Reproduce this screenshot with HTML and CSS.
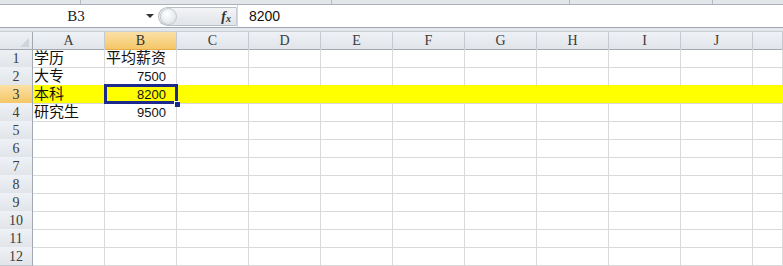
FILE: index.html
```html
<!DOCTYPE html>
<html lang="zh-CN">
<head>
    <meta charset="UTF-8">
    <title>工作表</title>
    <link rel="stylesheet" href="styles.css">
</head>
<body>
    <div class="ribbon">
        <span class="seg" style="width:81px"></span>
        <span class="seg" style="width:251px"></span>
        <span class="seg" style="width:238px"></span>
        <span class="seg" style="width:143px"></span>
        <span class="seg last"></span>
    </div>

    <div class="formula-bar">
        <div class="name-box">
            <span class="name">B3</span>
            <span class="arrow"></span>
        </div>
        <div class="fx-pill">
            <span class="knob"></span>
            <span class="fx">f<sub>x</sub></span>
        </div>
        <div class="formula">8200</div>
    </div>

    <div class="spacer"></div>

    <div class="sheet">
        <div class="row head">
            <div class="corner"><span class="tri"></span></div>
            <div class="ch">A</div><div class="ch sel">B</div><div class="ch">C</div><div class="ch">D</div><div class="ch">E</div>
            <div class="ch">F</div><div class="ch">G</div><div class="ch">H</div><div class="ch">I</div><div class="ch">J</div><div class="ch"></div>
        </div>
        <div class="row">
            <div class="rh">1</div>
            <div class="c">学历</div><div class="c">平均薪资</div><div class="c"></div><div class="c"></div><div class="c"></div>
            <div class="c"></div><div class="c"></div><div class="c"></div><div class="c"></div><div class="c"></div><div class="c"></div>
        </div>
        <div class="row">
            <div class="rh">2</div>
            <div class="c">大专</div><div class="c num">7500</div><div class="c"></div><div class="c"></div><div class="c"></div>
            <div class="c"></div><div class="c"></div><div class="c"></div><div class="c"></div><div class="c"></div><div class="c"></div>
        </div>
        <div class="row hl">
            <div class="rh sel">3</div>
            <div class="c">本科</div><div class="c num">8200</div><div class="c"></div><div class="c"></div><div class="c"></div>
            <div class="c"></div><div class="c"></div><div class="c"></div><div class="c"></div><div class="c"></div><div class="c"></div>
        </div>
        <div class="row">
            <div class="rh">4</div>
            <div class="c">研究生</div><div class="c num">9500</div><div class="c"></div><div class="c"></div><div class="c"></div>
            <div class="c"></div><div class="c"></div><div class="c"></div><div class="c"></div><div class="c"></div><div class="c"></div>
        </div>
        <div class="row">
            <div class="rh">5</div>
            <div class="c"></div><div class="c"></div><div class="c"></div><div class="c"></div><div class="c"></div>
            <div class="c"></div><div class="c"></div><div class="c"></div><div class="c"></div><div class="c"></div><div class="c"></div>
        </div>
        <div class="row">
            <div class="rh">6</div>
            <div class="c"></div><div class="c"></div><div class="c"></div><div class="c"></div><div class="c"></div>
            <div class="c"></div><div class="c"></div><div class="c"></div><div class="c"></div><div class="c"></div><div class="c"></div>
        </div>
        <div class="row">
            <div class="rh">7</div>
            <div class="c"></div><div class="c"></div><div class="c"></div><div class="c"></div><div class="c"></div>
            <div class="c"></div><div class="c"></div><div class="c"></div><div class="c"></div><div class="c"></div><div class="c"></div>
        </div>
        <div class="row">
            <div class="rh">8</div>
            <div class="c"></div><div class="c"></div><div class="c"></div><div class="c"></div><div class="c"></div>
            <div class="c"></div><div class="c"></div><div class="c"></div><div class="c"></div><div class="c"></div><div class="c"></div>
        </div>
        <div class="row">
            <div class="rh">9</div>
            <div class="c"></div><div class="c"></div><div class="c"></div><div class="c"></div><div class="c"></div>
            <div class="c"></div><div class="c"></div><div class="c"></div><div class="c"></div><div class="c"></div><div class="c"></div>
        </div>
        <div class="row">
            <div class="rh">10</div>
            <div class="c"></div><div class="c"></div><div class="c"></div><div class="c"></div><div class="c"></div>
            <div class="c"></div><div class="c"></div><div class="c"></div><div class="c"></div><div class="c"></div><div class="c"></div>
        </div>
        <div class="row">
            <div class="rh">11</div>
            <div class="c"></div><div class="c"></div><div class="c"></div><div class="c"></div><div class="c"></div>
            <div class="c"></div><div class="c"></div><div class="c"></div><div class="c"></div><div class="c"></div><div class="c"></div>
        </div>
        <div class="row">
            <div class="rh">12</div>
            <div class="c"></div><div class="c"></div><div class="c"></div><div class="c"></div><div class="c"></div>
            <div class="c"></div><div class="c"></div><div class="c"></div><div class="c"></div><div class="c"></div><div class="c"></div>
        </div>

        <div class="selection"></div>
        <div class="handle"></div>
    </div>
</body>
</html>
```

FILE: styles.css
```css
* {
    box-sizing: border-box;
}

body {
    margin: 0;
    width: 783px;
    height: 266px;
    overflow: hidden;
    background-color: #fff;
    font-family: "Liberation Sans", Arial, sans-serif;
}

/* remains of the ribbon above the formula bar */
.ribbon {
    display: flex;
    height: 5px;
    background-color: #e3e7ec;
    border-bottom: 1px solid #a9b0b8;
}

.seg {
    height: 100%;
    border-right: 1px solid #b4bbc3;
}

.seg.last {
    flex: 1;
    border-right: none;
}

.formula-bar {
    display: flex;
    height: 23px;
    background-color: #fff;
    border-bottom: 1px solid #a0a8b1;
}

.name-box {
    display: flex;
    align-items: center;
    width: 158px;
}

.name {
    flex: 1;
    text-align: center;
    font-family: "Liberation Serif", serif;
    font-size: 15px;
    color: #222;
    padding-left: 6px;
}

.arrow {
    width: 0;
    height: 0;
    margin-right: 4px;
    border-left: 4px solid transparent;
    border-right: 4px solid transparent;
    border-top: 4px solid #333;
}

.fx-pill {
    display: flex;
    align-items: center;
    justify-content: space-between;
    width: 79px;
    margin: 2px 0 1px;
    background: linear-gradient(#f2f4f6, #e1e4e8);
    border: 1px solid #b9bfc6;
    border-right-color: #c8cdd3;
    border-radius: 10px 0 0 10px;
    padding: 0 5px 0 1px;
}

.knob {
    width: 17px;
    height: 17px;
    border-radius: 50%;
    background: radial-gradient(circle at 40% 35%, #fff 0, #f1f3f5 35%, #d9dde2 100%);
    border: 1px solid #c3c8ce;
}

.fx {
    font-family: "Liberation Serif", serif;
    font-style: italic;
    font-weight: bold;
    font-size: 14px;
    color: #333;
    line-height: 1;
}

.fx sub {
    font-size: 10px;
    vertical-align: -1px;
}

.formula {
    flex: 1;
    display: flex;
    align-items: center;
    padding-left: 11px;
    font-size: 14px;
    color: #111;
    border-left: 1px solid #d5d9de;
}

.spacer {
    height: 3px;
    background-color: #e4e8ed;
}

/* the grid */
.sheet {
    position: relative;
}

.row {
    display: grid;
    grid-template-columns: 33px repeat(10, 72px) 1fr;
    height: 18px;
}

.corner,
.ch,
.rh {
    background: linear-gradient(#eef1f5, #e1e5ea);
    color: #3b3b3b;
    font-family: "Liberation Serif", serif;
    font-size: 14px;
    display: flex;
    align-items: center;
    justify-content: center;
}

.head {
    border-top: 1px solid #c9ced4;
}

.corner {
    position: relative;
    border-right: 1px solid #a2a9b1;
    border-bottom: 1px solid #a2a9b1;
}

.tri {
    position: absolute;
    right: 3px;
    bottom: 2px;
    width: 0;
    height: 0;
    border-left: 9px solid transparent;
    border-bottom: 9px solid #cfd4da;
}

.ch {
    border-right: 1px solid #c4c9cf;
    border-bottom: 1px solid #a2a9b1;
    padding-top: 1px;
}

.rh {
    border-right: 1px solid #a2a9b1;
    border-bottom: 1px solid #c4c9cf;
    padding-top: 2px;
}

.ch.sel,
.rh.sel {
    background: linear-gradient(#fbe0a6, #f4c767);
    border-bottom-color: #e6a948;
    color: #333;
}

.c {
    border-right: 1px solid #d9d9d9;
    border-bottom: 1px solid #d9d9d9;
    font-family: "Liberation Sans", "Noto Sans CJK SC", sans-serif;
    font-size: 15px;
    line-height: 17px;
    color: #111;
    padding-left: 1px;
    white-space: nowrap;
}

.c.num {
    text-align: right;
    font-size: 13px;
    padding-right: 10px;
    padding-top: 1px;
}

.hl .c {
    background-color: #ffff00;
    border-right-color: #ffff00;
}

.selection {
    position: absolute;
    left: 104px;
    top: 53px;
    width: 74px;
    height: 20px;
    border: 3px solid #1b2a8c;
}

.handle {
    position: absolute;
    left: 174px;
    top: 70px;
    width: 6px;
    height: 6px;
    background-color: #1b2a8c;
    border-left: 1px solid #fff;
    border-top: 1px solid #fff;
}
```
